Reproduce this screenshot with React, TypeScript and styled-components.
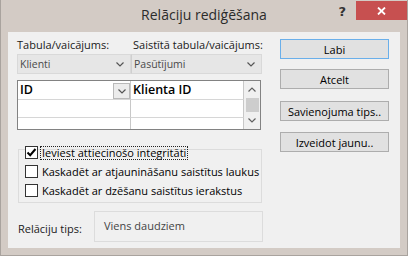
import React from "react";
import styled, { createGlobalStyle } from "styled-components";

const Global = createGlobalStyle`
  html, body { margin: 0; padding: 0; background: #d3cbc5; }
  body { font-family: "Open Sans", "Noto Sans", sans-serif; }
  * { box-sizing: border-box; }
`;

const Window = styled.div`
  width: 408px;
  height: 256px;
  background: #d3cbc5;
  border: 1px solid #a9a39e;
  border-top: none;
  display: flex;
  flex-direction: column;
`;

const TitleBar = styled.div`
  height: 32px;
  flex: none;
  display: grid;
  grid-template-columns: 1fr auto 1fr;
  align-items: start;
`;

const Title = styled.div`
  grid-column: 2;
  font-size: 14px;
  line-height: 20px;
  padding-top: 5px;
  color: #2b2b2b;
  white-space: nowrap;
`;

const Controls = styled.div`
  grid-column: 3;
  justify-self: end;
  display: flex;
  align-items: flex-start;
`;

const HelpGlyph = styled.div`
  font-family: "DejaVu Sans", sans-serif;
  font-weight: bold;
  font-size: 13px;
  line-height: 14px;
  color: #333;
  margin-top: 5px;
  margin-right: 10px;
`;

const CloseBtn = styled.div`
  width: 51px;
  height: 19px;
  margin-top: 1px;
  background: #c75050;
  display: flex;
  align-items: center;
  justify-content: center;
`;

const Body = styled.div`
  margin: 0 7px 7px 7px;
  flex: 1;
  background: #f0f0f0;
  display: flex;
  gap: 17px;
  padding: 5px 11px 0 9px;
`;

const LeftCol = styled.div`
  width: 246px;
  display: flex;
  flex-direction: column;
`;

const LabelsRow = styled.div`
  display: grid;
  grid-template-columns: 116px 1fr;
  height: 16px;
  font-size: 11px;
  line-height: 16px;
  color: #1a1a1a;
  white-space: nowrap;
`;

const ComboRow = styled.div`
  margin-top: 1px;
  display: flex;
  height: 20px;
`;

const Combo = styled.div<{ $w: number }>`
  width: ${(p) => p.$w}px;
  height: 20px;
  background: #e6e6e6;
  border: 1px solid #d9d9d9;
  & + & { border-left: 1px solid #cfcfcf; }
  display: flex;
  align-items: center;
  justify-content: space-between;
  padding: 0 6px 0 2px;
  font-size: 10.5px;
  color: #4a4a4a;
`;

const Grid = styled.div`
  margin-top: 6px;
  width: 244px;
  height: 50px;
  border: 1px solid #828282;
  background: #fff;
  display: grid;
  grid-template-columns: 113px 113px 16px;
  grid-template-rows: 19px 18px 11px;
`;

const Cell = styled.div<{ $last?: boolean }>`
  border-right: 1px solid #c8c8c8;
  border-bottom: ${(p) => (p.$last ? "none" : "1px solid #d6d6d6")};
  display: flex;
  align-items: flex-start;
  justify-content: space-between;
  padding-left: 2px;
  font-size: 12.5px;
  font-weight: 600;
  line-height: 17px;
  color: #000;
  white-space: nowrap;
`;

const CellDrop = styled.div`
  width: 17px;
  height: 16px;
  margin-top: 2px;
  background: #ececec;
  border: 1px solid #b9b9b9;
  display: flex;
  align-items: center;
  justify-content: center;
`;

const ScrollBar = styled.div`
  grid-column: 3;
  grid-row: 1 / span 3;
  background: #f0f0f0;
  display: flex;
  flex-direction: column;
  align-items: center;
`;

const ScrollArrow = styled.div`
  height: 18px;
  width: 100%;
  display: flex;
  align-items: center;
  justify-content: center;
`;

const Thumb = styled.div`
  width: 13px;
  height: 15px;
  margin-left: 1px;
  background: #cdcdcd;
`;

const GroupBox = styled.div`
  margin-top: 19px;
  margin-left: 1px;
  width: 244px;
  height: 54px;
  border: 1px solid #dcdcdc;
  padding: 0 0 0 6px;
  display: flex;
  flex-direction: column;
  gap: 6px;
`;

const CheckRow = styled.div<{ $first?: boolean }>`
  display: flex;
  align-items: center;
  gap: 3px;
  height: 13px;
  margin-top: ${(p) => (p.$first ? "-4px" : "0")};
  font-size: 11px;
  color: #000;
  white-space: nowrap;
`;

const Box = styled.div`
  width: 13px;
  height: 13px;
  border: 1px solid #333;
  background: #fff;
  display: flex;
  align-items: center;
  justify-content: center;
`;

const CheckLabel = styled.span<{ $focus?: boolean }>`
  line-height: 12px;
  padding: 0 1px;
  outline: ${(p) => (p.$focus ? "1px dotted #222" : "none")};
`;

const RelRow = styled.div`
  margin-top: 8px;
  display: flex;
  height: 31px;
`;

const RelLabel = styled.div`
  width: 77px;
  padding-left: 1px;
  padding-top: 11px;
  font-size: 11px;
  line-height: 14px;
  color: #1a1a1a;
`;

const RelBox = styled.div`
  width: 169px;
  height: 31px;
  border: 1px solid #dcdcdc;
  padding: 7px 0 0 9px;
  font-size: 11px;
  line-height: 14px;
  color: #444;
`;

const RightCol = styled.div`
  width: 109px;
  display: flex;
  flex-direction: column;
  padding-top: 2px;
`;

const Button = styled.div<{ $default?: boolean; $gap: number }>`
  margin-top: ${(p) => p.$gap}px;
  height: 20px;
  border: 1px solid ${(p) => (p.$default ? "#6aafea" : "#adadad")};
  background: #e1e1e1;
  display: flex;
  align-items: center;
  justify-content: center;
  font-size: 11px;
  color: #000;
  white-space: nowrap;
`;

const Chevron = ({ color = "#555", down = true }: { color?: string; down?: boolean }) => (
  <svg width="8" height="5" viewBox="0 0 8 5">
    <polyline
      points={down ? "0.5,0.5 4,4 7.5,0.5" : "0.5,4.5 4,1 7.5,4.5"}
      fill="none"
      stroke={color}
      strokeWidth="1.2"
    />
  </svg>
);

export default function App() {
  return (
    <>
      <Global />
      <Window>
        <TitleBar>
          <Title>Relāciju rediģēšana</Title>
          <Controls>
            <HelpGlyph>?</HelpGlyph>
            <CloseBtn>
              <svg width="9" height="8" viewBox="0 0 9 8">
                <path d="M1 0.5 L8 7.5 M8 0.5 L1 7.5" stroke="#fff" strokeWidth="1.8" />
              </svg>
            </CloseBtn>
          </Controls>
        </TitleBar>
        <Body>
          <LeftCol>
            <LabelsRow>
              <span>Tabula/vaicājums:</span>
              <span>Saistītā tabula/vaicājums:</span>
            </LabelsRow>
            <ComboRow>
              <Combo $w={114}>
                <span>Klienti</span>
                <Chevron />
              </Combo>
              <Combo $w={131}>
                <span>Pasūtījumi</span>
                <Chevron />
              </Combo>
            </ComboRow>
            <Grid>
              <Cell>
                <span>ID</span>
                <CellDrop>
                  <Chevron />
                </CellDrop>
              </Cell>
              <Cell>
                <span>Klienta ID</span>
              </Cell>
              <ScrollBar>
                <ScrollArrow>
                  <Chevron down={false} color="#606060" />
                </ScrollArrow>
                <Thumb />
                <ScrollArrow>
                  <Chevron color="#606060" />
                </ScrollArrow>
              </ScrollBar>
              <Cell />
              <Cell />
              <Cell $last />
              <Cell $last />
            </Grid>
            <GroupBox>
              <CheckRow $first>
                <Box>
                  <svg width="11" height="11" viewBox="0 0 11 11">
                    <polyline points="1.5,5.5 4.2,8.2 9.5,2" fill="none" stroke="#000" strokeWidth="2" />
                  </svg>
                </Box>
                <CheckLabel $focus>Ieviest attiecinošo integritāti</CheckLabel>
              </CheckRow>
              <CheckRow>
                <Box />
                <CheckLabel>Kaskadēt ar atjaunināšanu saistītus laukus</CheckLabel>
              </CheckRow>
              <CheckRow>
                <Box />
                <CheckLabel>Kaskadēt ar dzēšanu saistītus ierakstus</CheckLabel>
              </CheckRow>
            </GroupBox>
            <RelRow>
              <RelLabel>Relāciju tips:</RelLabel>
              <RelBox>Viens daudziem</RelBox>
            </RelRow>
          </LeftCol>
          <RightCol>
            <Button $default $gap={0}>Labi</Button>
            <Button $gap={10}>Atcelt</Button>
            <Button $gap={12}>Savienojuma tips..</Button>
            <Button $gap={11}>Izveidot jaunu..</Button>
          </RightCol>
        </Body>
      </Window>
    </>
  );
}
